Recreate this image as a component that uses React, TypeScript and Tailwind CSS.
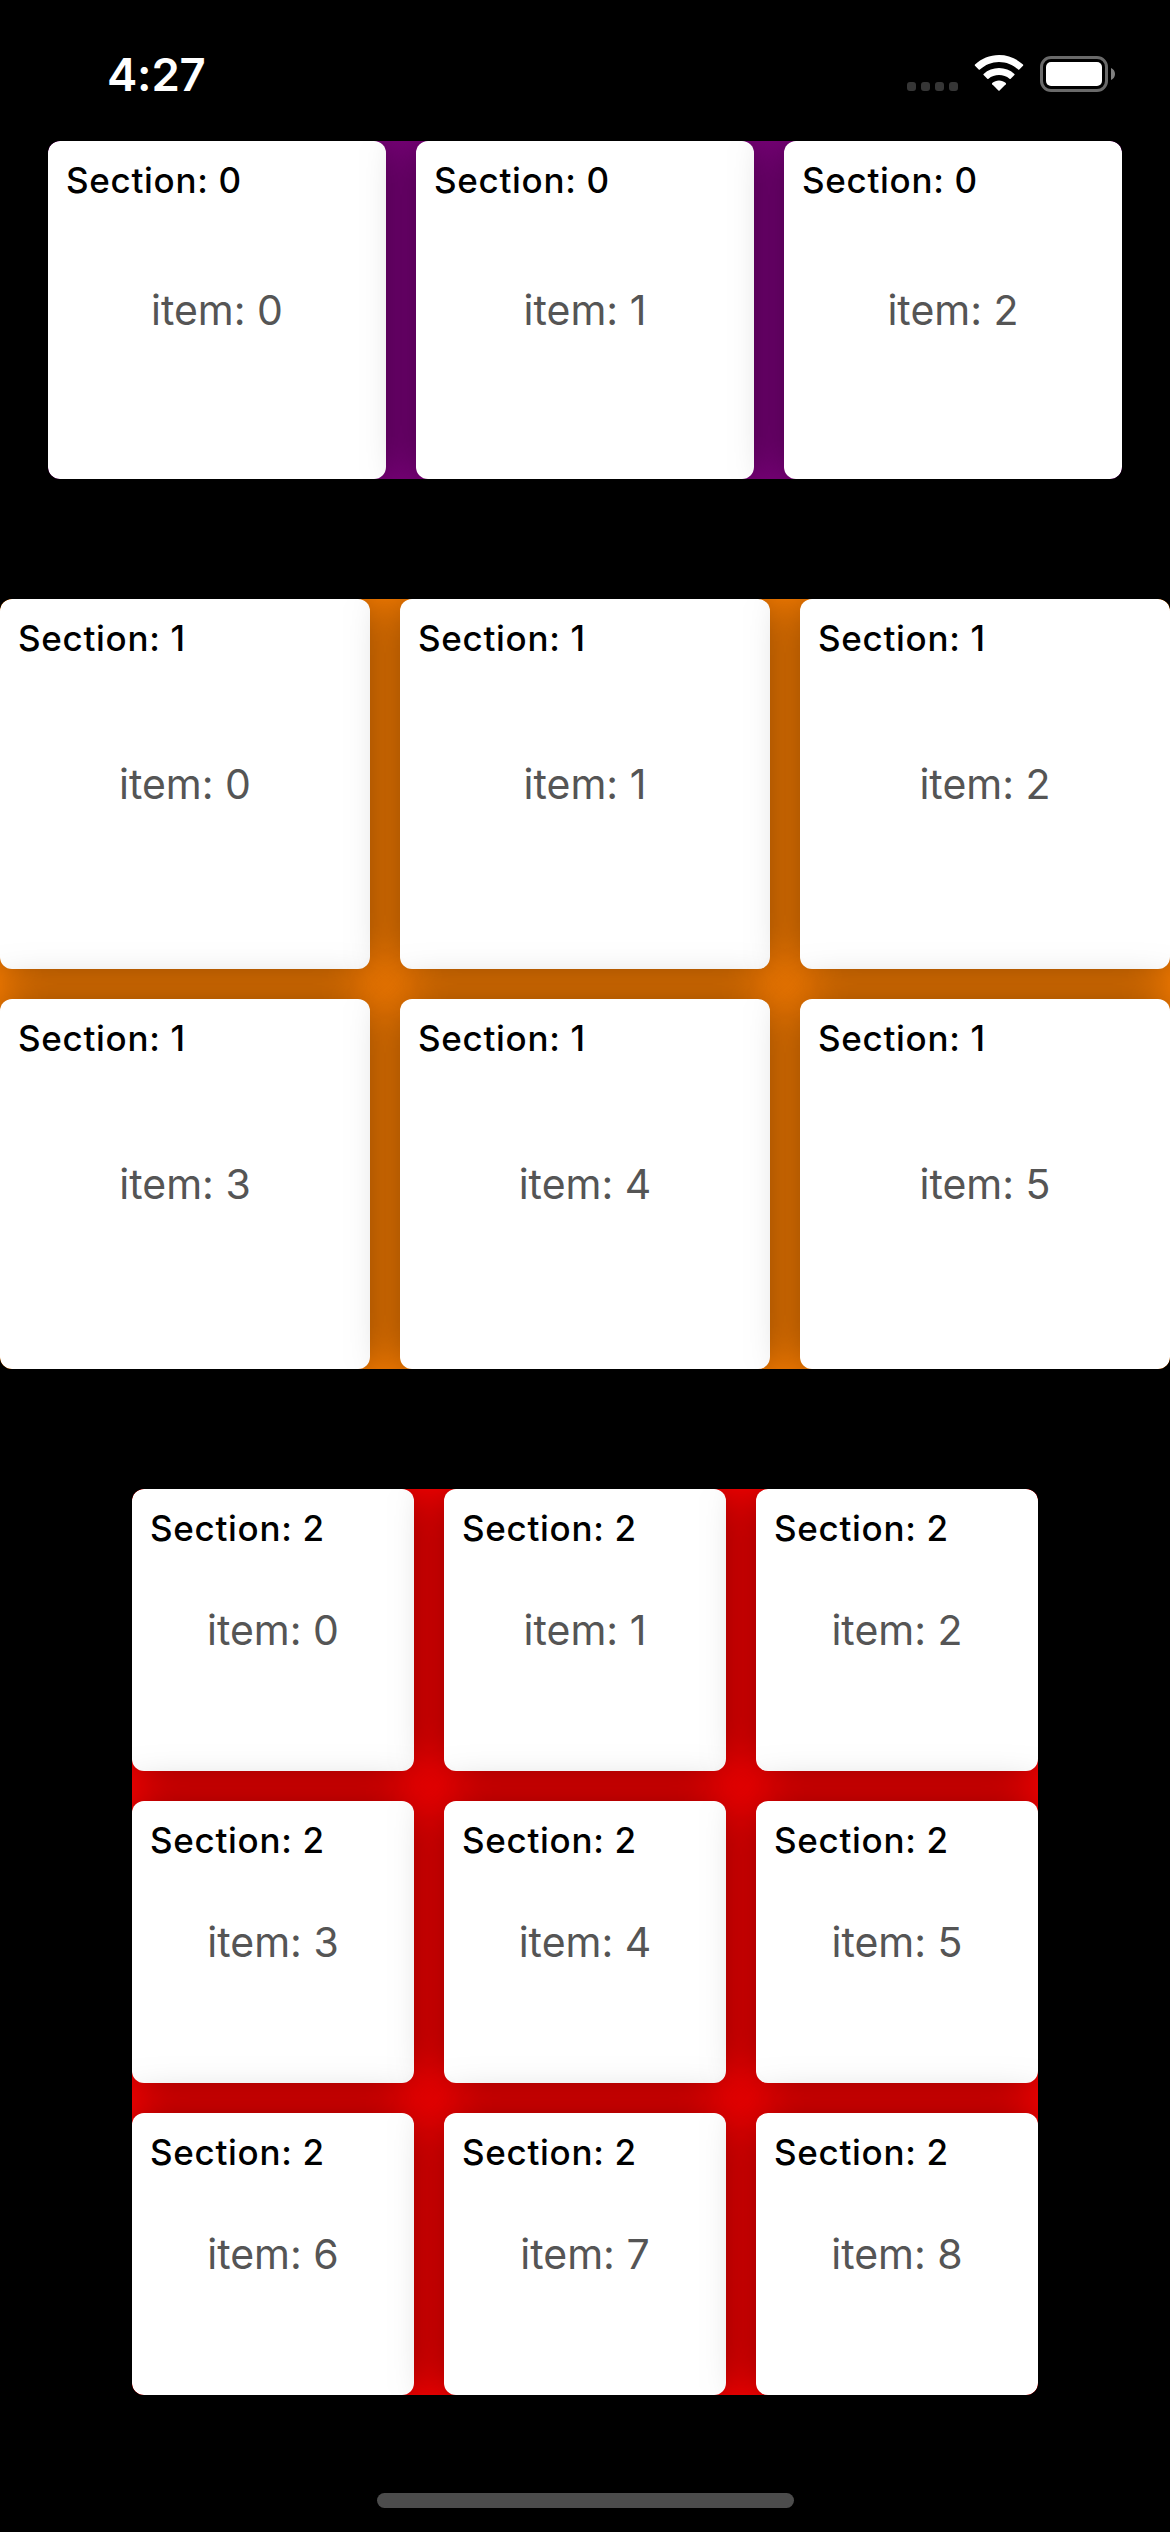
type Section = {
  id: number;
  count: number;
  panel: string;
  cell: string;
};

const sections: Section[] = [
  { id: 0, count: 3, panel: "w-[1074px] bg-[#800080]", cell: "size-[338px]" },
  { id: 1, count: 6, panel: "w-[1170px] bg-[#ff8000]", cell: "size-[370px]" },
  { id: 2, count: 9, panel: "w-[906px] bg-[#ff0000]", cell: "size-[282px]" },
];

function WifiIcon() {
  return (
    <svg width="50" height="38" viewBox="0 0 50 38" fill="#fff">
      <path d="M25 1C34.200 1 42.800 4.600 49 10.600Q49.500 11.200 49 11.800L45.300 15.600Q44.700 16.100 44.100 15.600C38.900 10.800 32.200 8 25 8S11.100 10.800 5.900 15.600Q5.300 16.100 4.700 15.600L1 11.800Q.5 11.200 1 10.600C7.200 4.600 15.800 1 25 1Z" />
      <path d="M25 14C30.700 14 36.200 16.100 40.400 19.900Q41 20.500 40.400 21.100L36.700 24.700Q36.100 25.200 35.500 24.700C32.600 22.200 28.900 21 25 21S17.400 22.200 14.500 24.700Q13.900 25.200 13.300 24.700L9.600 21.100Q9 20.500 9.600 19.900C13.800 16.100 19.300 14 25 14Z" />
      <path d="M25 26.500C27.500 26.500 29.900 27.400 31.800 29Q32.300 29.600 31.800 30.200L25.600 36.500Q25 37 24.400 36.500L18.200 30.200Q17.700 29.600 18.200 29C20.100 27.400 22.500 26.500 25 26.500Z" />
    </svg>
  );
}

function BatteryIcon() {
  return (
    <svg width="76" height="36" viewBox="0 0 76 36">
      <rect x="1.500" y="1.500" width="65" height="33" rx="9.500" fill="none" stroke="#6a6a6a" strokeWidth="3" />
      <rect x="6" y="6" width="56" height="24" rx="5" fill="#fff" />
      <path d="M71 12C73.400 13 75 15.300 75 18S73.400 23 71 24Z" fill="#808080" />
    </svg>
  );
}

function StatusBar() {
  return (
    <header className="flex h-[141px] items-start justify-between pr-[54px] pl-[107px]">
      <time className="mt-[47px] text-[45.5px] leading-[56px] font-semibold tracking-[-0.2px] text-white">
        4:27
      </time>
      <div className="mt-[55px] flex items-start">
        <div className="mt-[27px] mr-[16px] flex gap-[5px]">
          {[0, 1, 2, 3].map((dot) => (
            <span key={dot} className="size-[9px] rounded-[3px] bg-[#363636]" />
          ))}
        </div>
        <div className="-mt-px mr-[16px]">
          <WifiIcon />
        </div>
        <div className="mt-px">
          <BatteryIcon />
        </div>
      </div>
    </header>
  );
}

function Card({ section, item, size }: { section: number; item: number; size: string }) {
  return (
    <article
      className={`grid rounded-[12px] bg-white shadow-[0_0_48px_rgba(0,0,0,0.5)] ${size}`}
    >
      <h2 className="col-start-1 row-start-1 self-start pt-[18px] pl-[18px] text-[35px] leading-[43px] font-medium tracking-[0.7px] text-black">
        Section: {section}
      </h2>
      <p className="col-start-1 row-start-1 self-center justify-self-center text-[41px] leading-[50px] font-normal text-[#555]">
        item: {item}
      </p>
    </article>
  );
}

export default function App() {
  return (
    <div className="flex h-[2532px] w-[1170px] flex-col overflow-hidden bg-black font-['Inter',sans-serif]">
      <StatusBar />
      <main className="flex flex-col items-center gap-[120px]">
        {sections.map(({ id, count, panel, cell }) => (
          <section
            key={id}
            className={`grid grid-cols-3 gap-[30px] overflow-hidden rounded-[12px] ${panel}`}
          >
            {Array.from({ length: count }, (_, item) => (
              <Card key={item} section={id} item={item} size={cell} />
            ))}
          </section>
        ))}
      </main>
      <div className="mt-auto mb-[24px] h-[15px] w-[417px] self-center rounded-full bg-[#4c4c4c]" />
    </div>
  );
}
